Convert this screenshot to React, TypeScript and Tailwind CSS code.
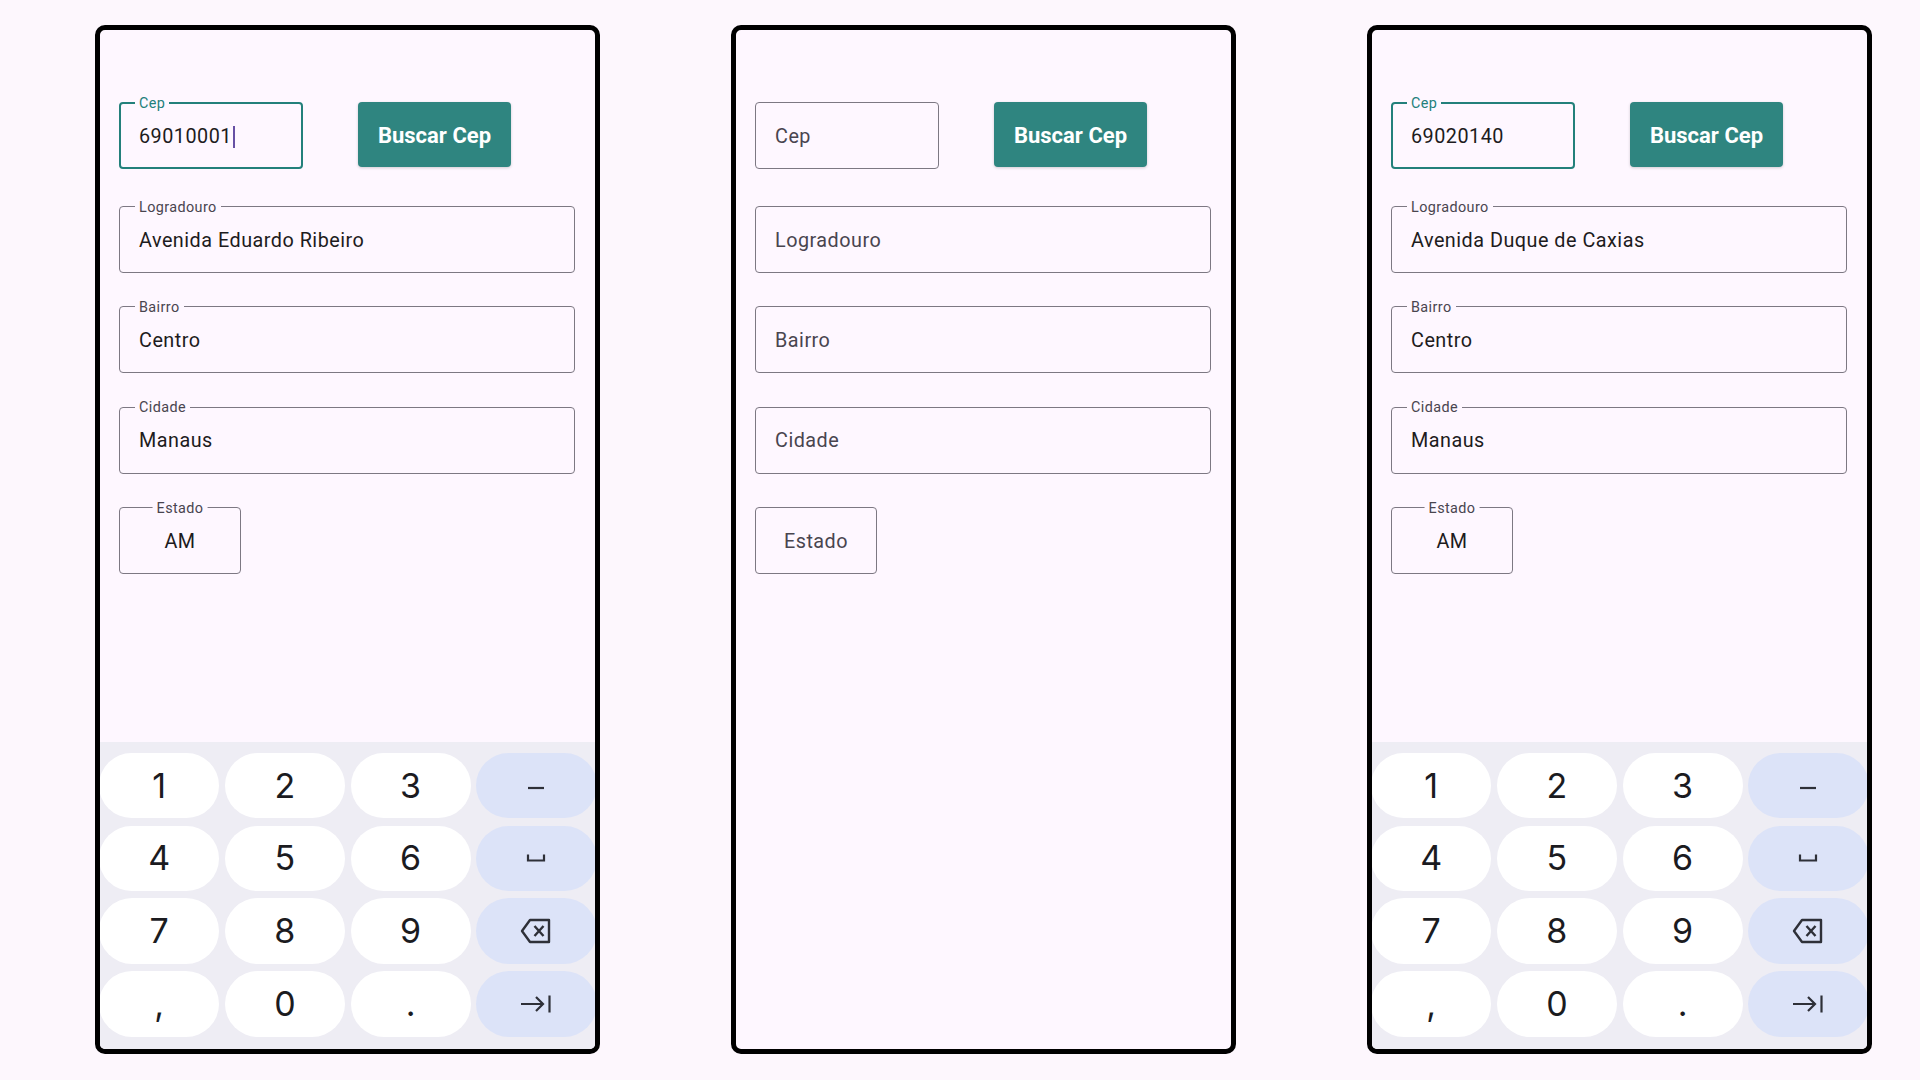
import clsx from 'clsx'

const TEAL = '#2F8580'

type FieldProps = {
  label: string
  value?: string
  focused?: boolean
  cursor?: boolean
  center?: boolean
  className?: string
}

function Field({ label, value, focused, cursor, center, className }: FieldProps) {
  const filled = !!value
  return (
    <div
      className={clsx(
        'relative flex h-[67px] items-center rounded-[4px] pt-[2px]',
        focused ? 'border-2 border-[#23807B]' : 'border border-[#7D7883]',
        center ? 'justify-center' : focused ? 'pl-[18px]' : 'pl-[19px]',
        className,
      )}
    >
      {(filled || focused) && (
        <span
          className={clsx(
            'absolute bg-[#FEF7FF] px-[4px] text-[14.4px] leading-[18px] tracking-[0.4px]',
            focused ? 'top-[-9.5px] text-[#23807B]' : 'top-[-8.5px] text-[#49454F]',
            center ? 'left-1/2 -translate-x-1/2' : focused ? 'left-[14px]' : 'left-[15px]',
          )}
        >
          {label}
        </span>
      )}
      <span
        className={clsx(
          'text-[19.8px] leading-[24px] tracking-[0.5px]',
          filled ? 'text-[#1D1B20]' : 'text-[#49454F]',
        )}
      >
        {filled ? value : label}
      </span>
      {cursor && <span className="ml-[1.5px] h-[22px] w-[2px] bg-[#6750A4]" />}
    </div>
  )
}

function Dash() {
  return (
    <svg width="18" height="24" viewBox="0 0 18 24" className="mt-[4px]">
      <path d="M1 12 H17" stroke="#2E3038" strokeWidth="2.2" />
    </svg>
  )
}

function SpaceIcon() {
  return (
    <svg width="20" height="10" viewBox="0 0 20 10">
      <path d="M2 1.5 V7.5 H18 V1.5" stroke="#2E3038" strokeWidth="2.2" fill="none" />
    </svg>
  )
}

function BackspaceIcon() {
  return (
    <svg width="32" height="26" viewBox="0 0 32 26">
      <path
        d="M10 2 H29 V24 H10 L2 13 Z"
        stroke="#2E3038"
        strokeWidth="2.4"
        strokeLinejoin="round"
        fill="none"
      />
      <path d="M14.5 8 L23.5 18 M23.5 8 L14.5 18" stroke="#2E3038" strokeWidth="2.4" />
    </svg>
  )
}

function TabIcon() {
  return (
    <svg width="32" height="20" viewBox="0 0 32 20">
      <path
        d="M1 10 H23 M16 3 L23 10 L16 17 M29.5 1.5 V18.5"
        stroke="#2E3038"
        strokeWidth="2.2"
        fill="none"
      />
    </svg>
  )
}

const KEYS: { label?: string; icon?: 'dash' | 'space' | 'back' | 'tab' }[] = [
  { label: '1' }, { label: '2' }, { label: '3' }, { icon: 'dash' },
  { label: '4' }, { label: '5' }, { label: '6' }, { icon: 'space' },
  { label: '7' }, { label: '8' }, { label: '9' }, { icon: 'back' },
  { label: ',' }, { label: '0' }, { label: '.' }, { icon: 'tab' },
]

function Keyboard() {
  return (
    <div className="bg-[#EEEDF4] pb-[12.5px] pt-[11px]">
      <div className="ml-[-1px] mr-[-1.5px] grid grid-cols-4 gap-x-[5.5px] gap-y-[7.2px]">
        {KEYS.map((k, i) => (
          <div
            key={i}
            className={clsx(
              'flex h-[65.5px] items-center justify-center rounded-[33px]',
              k.icon ? 'bg-[#DCE3F8]' : 'bg-white',
            )}
          >
            {k.label && (
              <span className="font-['Inter',sans-serif] text-[34px] leading-none text-[#1B1B1F]">
                {k.label}
              </span>
            )}
            {k.icon === 'dash' && <Dash />}
            {k.icon === 'space' && <SpaceIcon />}
            {k.icon === 'back' && <BackspaceIcon />}
            {k.icon === 'tab' && <TabIcon />}
          </div>
        ))}
      </div>
    </div>
  )
}

type PhoneProps = {
  cep?: string
  logradouro?: string
  bairro?: string
  cidade?: string
  estado?: string
  focused?: boolean
  cursor?: boolean
  keyboard?: boolean
}

function Phone({ cep, logradouro, bairro, cidade, estado, focused, cursor, keyboard }: PhoneProps) {
  return (
    <div className="flex h-[1029px] w-[505px] shrink-0 flex-col overflow-hidden rounded-[10px] border-[5px] border-black bg-[#FEF7FF]">
      <div className="flex-1 pl-[19px] pr-[20px] pt-[72px]">
        <div className="flex items-start gap-[55px]">
          <Field label="Cep" value={cep} focused={focused} cursor={cursor} className="w-[184px]" />
          <button
            className="h-[65px] w-[153px] rounded-[4px] pt-[2px] text-[22px] font-bold text-white shadow-[0_1px_3px_rgba(0,0,0,0.18)]"
            style={{ backgroundColor: TEAL }}
          >
            Buscar Cep
          </button>
        </div>
        <Field label="Logradouro" value={logradouro} className="mt-[37px]" />
        <Field label="Bairro" value={bairro} className="mt-[33px]" />
        <Field label="Cidade" value={cidade} className="mt-[33.5px]" />
        <Field label="Estado" value={estado} center className="mt-[33.5px] w-[122px]" />
      </div>
      {keyboard && <Keyboard />}
    </div>
  )
}

export default function App() {
  return (
    <div className="flex min-h-screen w-full items-start gap-[131px] bg-[#FDF7FD] pl-[95px] pt-[25px] font-['Roboto','Liberation_Sans',sans-serif]">
      <Phone
        cep="69010001"
        logradouro="Avenida Eduardo Ribeiro"
        bairro="Centro"
        cidade="Manaus"
        estado="AM"
        focused
        cursor
        keyboard
      />
      <Phone />
      <Phone
        cep="69020140"
        logradouro="Avenida Duque de Caxias"
        bairro="Centro"
        cidade="Manaus"
        estado="AM"
        focused
        keyboard
      />
    </div>
  )
}
